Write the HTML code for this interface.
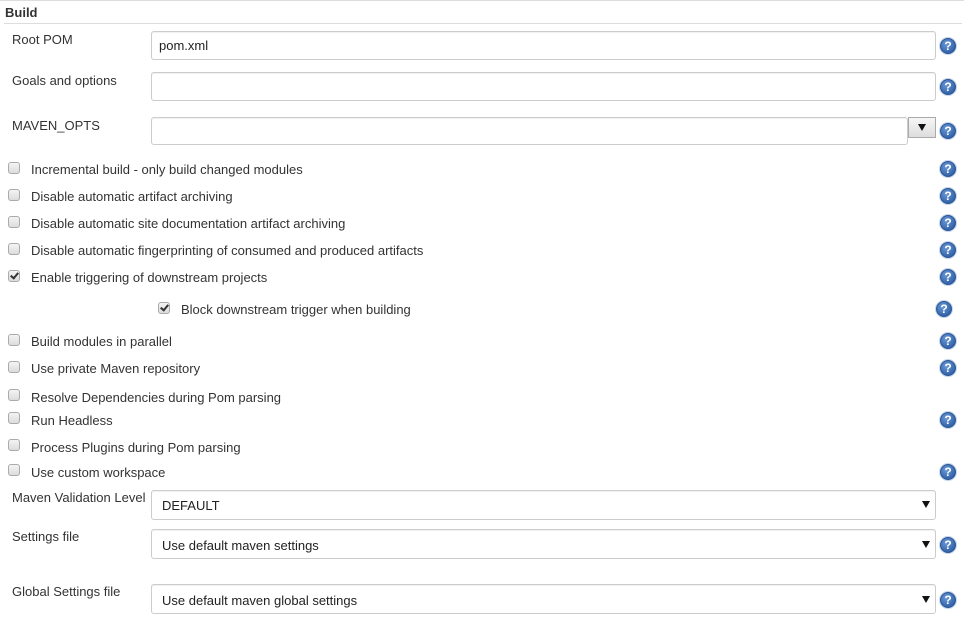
<!DOCTYPE html>
<html><head><style>
body{margin:0;width:964px;height:624px;background:#fff;position:relative;font-family:"Liberation Sans",Arial,sans-serif;font-size:13px;color:#333;overflow:hidden}
.a{position:absolute;white-space:nowrap}
.t{position:absolute;white-space:nowrap;line-height:16px;margin-top:1px}
.in{position:absolute;border:1px solid #ccc;border-radius:3px;background:#fff;box-sizing:border-box;box-shadow:inset 0 1px 1px rgba(0,0,0,.06)}
.cb{position:absolute;width:12px;height:12px;border:1px solid #aaa;border-radius:3px;background:linear-gradient(#f4f4f4,#dcdcdc);box-sizing:border-box}
.cb.c::after{content:"";position:absolute;left:3px;top:0px;width:3px;height:6px;border:solid #333;border-width:0 2px 2px 0;transform:rotate(40deg)}
.h{position:absolute;width:16px;height:16px;border-radius:50%;background:radial-gradient(circle at 40% 35%,#6b9ad6,#1f4f98);box-sizing:border-box;border:1px solid #2a5699;color:#fff;font:bold 12px/14px "Liberation Sans",sans-serif;text-align:center;box-shadow:0 0 0 1px #c7d6ea}
.arr{position:absolute;width:0;height:0;border-left:4px solid transparent;border-right:4px solid transparent;border-top:7px solid #111}
</style></head><body>
<div class="a" style="left:0;top:0;width:964px;height:1px;background:#ddd"></div>
<div class="t" style="left:5px;top:4px;font-weight:bold">Build</div>
<div class="a" style="left:4px;top:23px;width:958px;height:1px;background:#ddd"></div>

<div class="t" style="left:12px;top:31px">Root POM</div>
<div class="in" style="left:151px;top:31px;width:785px;height:29px"></div>
<div class="t" style="left:159px;top:37px;color:#222">pom.xml</div>
<div class="h" style="left:940px;top:38px">?</div>

<div class="t" style="left:12px;top:72px">Goals and options</div>
<div class="in" style="left:151px;top:72px;width:785px;height:29px"></div>
<div class="h" style="left:940px;top:79px">?</div>

<div class="t" style="left:12px;top:117px">MAVEN_OPTS</div>
<div class="in" style="left:151px;top:117px;width:757px;height:28px"></div>
<div class="a" style="left:908px;top:117px;width:28px;height:21px;border:1px solid #aaa;box-sizing:border-box;background:linear-gradient(#f6f6f6,#ddd)"></div>
<div class="arr" style="left:918px;top:124px"></div>
<div class="h" style="left:940px;top:123px">?</div>

<div class="cb" style="left:8px;top:162px"></div><div class="t" style="left:31px;top:161px">Incremental build - only build changed modules</div><div class="h" style="left:940px;top:161px">?</div>
<div class="cb" style="left:8px;top:189px"></div><div class="t" style="left:31px;top:188px">Disable automatic artifact archiving</div><div class="h" style="left:940px;top:188px">?</div>
<div class="cb" style="left:8px;top:216px"></div><div class="t" style="left:31px;top:215px">Disable automatic site documentation artifact archiving</div><div class="h" style="left:940px;top:215px">?</div>
<div class="cb" style="left:8px;top:243px"></div><div class="t" style="left:31px;top:242px">Disable automatic fingerprinting of consumed and produced artifacts</div><div class="h" style="left:940px;top:242px">?</div>
<div class="cb c" style="left:8px;top:270px"></div><div class="t" style="left:31px;top:269px">Enable triggering of downstream projects</div><div class="h" style="left:940px;top:269px">?</div>
<div class="cb c" style="left:158px;top:302px"></div><div class="t" style="left:181px;top:301px">Block downstream trigger when building</div><div class="h" style="left:936px;top:301px">?</div>
<div class="cb" style="left:8px;top:334px"></div><div class="t" style="left:31px;top:333px">Build modules in parallel</div><div class="h" style="left:940px;top:333px">?</div>
<div class="cb" style="left:8px;top:361px"></div><div class="t" style="left:31px;top:360px">Use private Maven repository</div><div class="h" style="left:940px;top:360px">?</div>
<div class="cb" style="left:8px;top:389px"></div><div class="t" style="left:31px;top:389px">Resolve Dependencies during Pom parsing</div>
<div class="cb" style="left:8px;top:412px"></div><div class="t" style="left:31px;top:412px">Run Headless</div><div class="h" style="left:940px;top:412px">?</div>
<div class="cb" style="left:8px;top:439px"></div><div class="t" style="left:31px;top:439px">Process Plugins during Pom parsing</div>
<div class="cb" style="left:8px;top:464px"></div><div class="t" style="left:31px;top:464px">Use custom workspace</div><div class="h" style="left:940px;top:464px">?</div>

<div class="t" style="left:12px;top:489px">Maven Validation Level</div>
<div class="in" style="left:151px;top:490px;width:785px;height:30px"></div>
<div class="t" style="left:162px;top:497px;color:#222">DEFAULT</div>
<div class="arr" style="left:922px;top:501px"></div>

<div class="t" style="left:12px;top:528px">Settings file</div>
<div class="in" style="left:151px;top:529px;width:785px;height:30px"></div>
<div class="t" style="left:162px;top:537px;color:#222">Use default maven settings</div>
<div class="arr" style="left:922px;top:541px"></div>
<div class="h" style="left:940px;top:537px">?</div>

<div class="t" style="left:12px;top:583px">Global Settings file</div>
<div class="in" style="left:151px;top:584px;width:785px;height:30px"></div>
<div class="t" style="left:162px;top:592px;color:#222">Use default maven global settings</div>
<div class="arr" style="left:922px;top:596px"></div>
<div class="h" style="left:940px;top:592px">?</div>
</body></html>
